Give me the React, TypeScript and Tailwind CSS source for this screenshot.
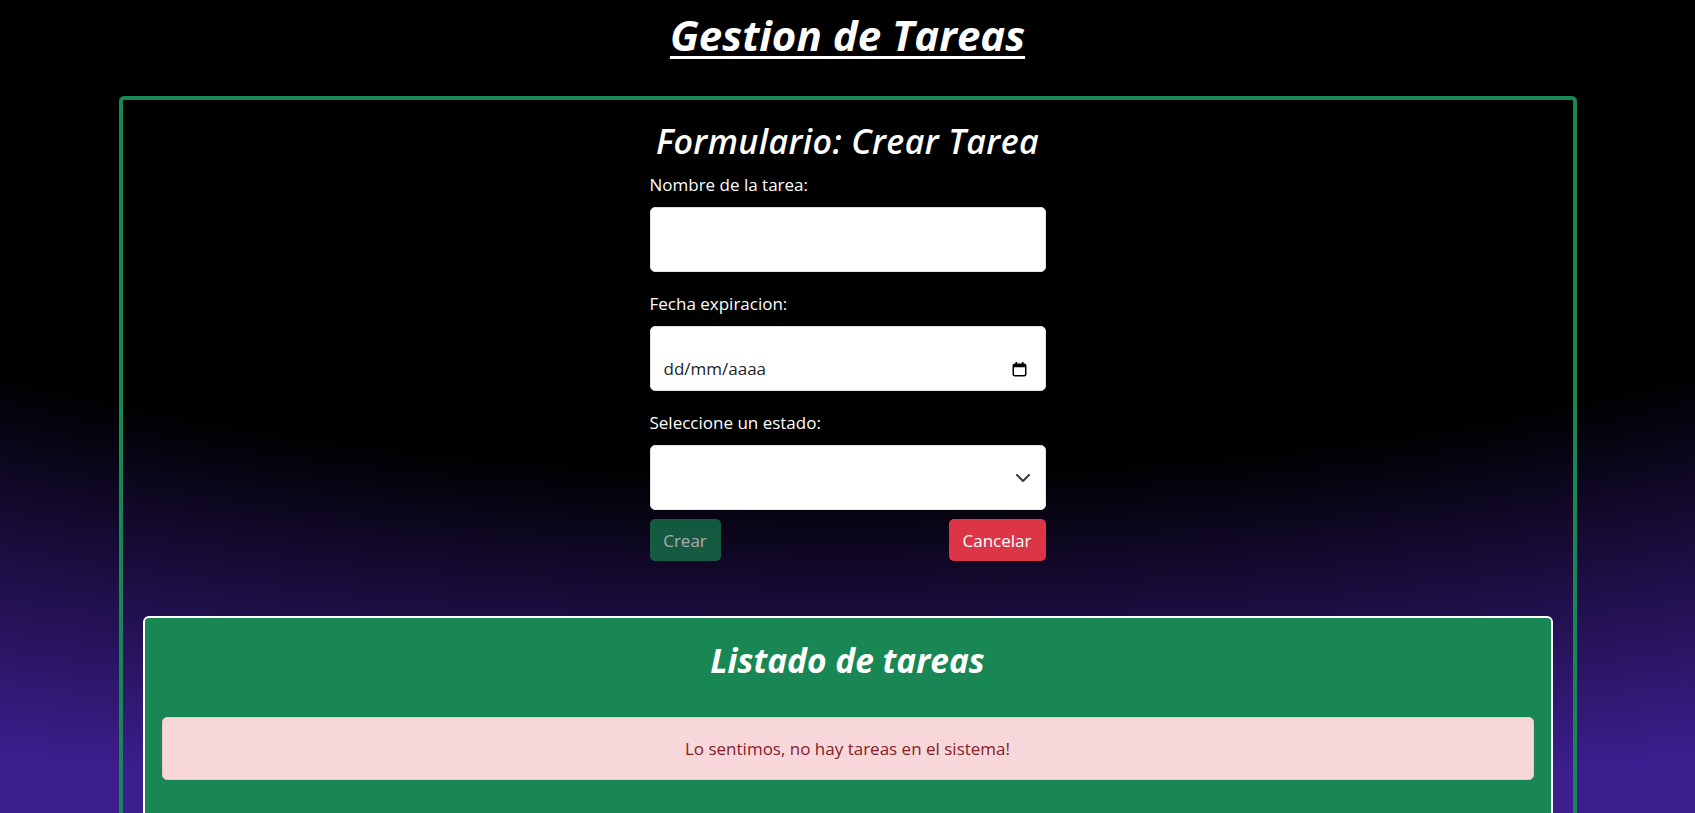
import React, { useState } from 'react';

// calendar glyph like chrome's date picker indicator
const CalendarIcon = () => (
  <svg width="15" height="16" viewBox="0 0 15 16" fill="none">
    <rect x="1.25" y="3.25" width="12.5" height="11.5" rx="1.5" stroke="#000" strokeWidth="1.5" />
    <rect x="1.25" y="3.25" width="12.5" height="3" fill="#000" />
    <rect x="3.5" y="1" width="1.6" height="3" fill="#000" />
    <rect x="9.9" y="1" width="1.6" height="3" fill="#000" />
  </svg>
);

const Chevron = () => (
  <svg width="16" height="16" viewBox="0 0 16 16" fill="none">
    <path d="m2 5 6 6 6-6" stroke="#343a40" strokeWidth="2" strokeLinecap="round" strokeLinejoin="round" />
  </svg>
);

export default function App() {
  const [nombre, setNombre] = useState('');
  const [estado, setEstado] = useState('');

  return (
    <div className="min-h-screen bg-[radial-gradient(140%_100%_at_50%_0%,#000_58%,#3d1e8f_100%)] bg-fixed text-white font-['Open_Sans',sans-serif] pt-[10px] pb-10">
      <h1 className="text-center text-[42px] leading-[1.2] font-bold italic underline decoration-[3px] underline-offset-[5px]">
        Gestion de Tareas
      </h1>

      <div className="mt-[36px] mx-auto w-[1458px] border-4 border-[#198754] rounded-[5px] pt-[21px] px-[20px] pb-10">
        <div className="mx-auto w-[396px]">
          <h2 className="text-center text-[34px] leading-[1.2] font-semibold italic tracking-[0.4px]">
            Formulario: Crear Tarea
          </h2>

          <div className="mt-[10px] text-[17px] leading-[25px]">
            <label className="block mb-[10px]">Nombre de la tarea:</label>
            <input
              value={nombre}
              onChange={(e) => setNombre(e.target.value)}
              className="block w-full h-[65px] bg-white text-[#212529] border border-[#dee2e6] rounded-[5px] px-[13px] outline-none"
            />

            <label className="block mt-[19px] mb-[10px]">Fecha expiracion:</label>
            <div className="flex items-end w-full h-[65px] bg-white text-[#212529] border border-[#dee2e6] rounded-[5px] pl-[13px] pr-[18px] pb-[9px]">
              <div className="flex items-center justify-between w-full">
                <span>dd/mm/aaaa</span>
                <CalendarIcon />
              </div>
            </div>

            <label className="block mt-[19px] mb-[10px]">Seleccione un estado:</label>
            <div className="relative">
              <select
                value={estado}
                onChange={(e) => setEstado(e.target.value)}
                className="block w-full h-[65px] appearance-none bg-white text-[#212529] border border-[#dee2e6] rounded-[5px] px-[13px] outline-none"
              >
                <option value=""></option>
                <option value="pendiente">Pendiente</option>
                <option value="en-proceso">En proceso</option>
                <option value="terminada">Terminada</option>
              </select>
              <span className="pointer-events-none absolute right-[15px] top-1/2 -translate-y-1/2">
                <Chevron />
              </span>
            </div>

            <div className="mt-[9px] flex justify-between">
              <button
                disabled
                className="w-[71px] h-[42px] rounded-[5px] bg-[#198754] text-white opacity-65"
              >
                Crear
              </button>
              <button
                onClick={() => { setNombre(''); setEstado(''); }}
                className="w-[97px] h-[42px] rounded-[5px] bg-[#dc3545] text-white"
              >
                Cancelar
              </button>
            </div>
          </div>
        </div>

        <div className="mt-[55px] bg-[#198754] border-2 border-white rounded-[6px] pt-[22px] px-[17px] pb-10">
          <h2 className="text-center text-[33.5px] leading-[1.2] font-bold italic">
            Listado de tareas
          </h2>
          <div className="mt-[37px] h-[63px] flex items-center justify-center bg-[#f8d7da] border border-[#f5c2c7] rounded-[5px] text-[#842029] text-[17px]">
            Lo sentimos, no hay tareas en el sistema!
          </div>
        </div>
      </div>
    </div>
  );
}
